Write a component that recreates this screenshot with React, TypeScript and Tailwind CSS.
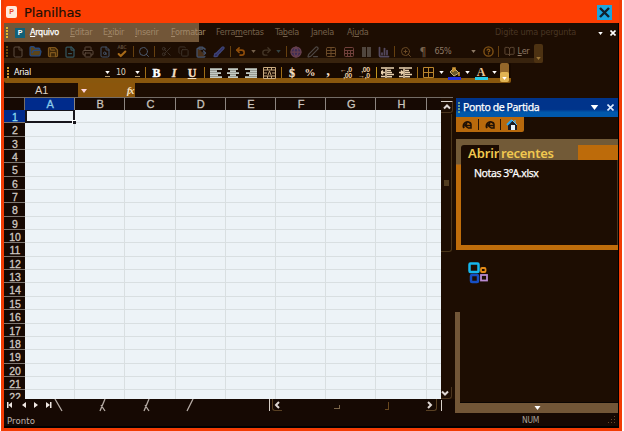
import React from "react";
import {
  File, FolderOpen, Save, FileMinus, Printer, FileSearch, Check, Search, Scissors, Copy, ClipboardPaste,
  Brush, Undo2, Redo2, Globe, PenLine, Table, Sheet, ChartColumn, ZoomIn, CircleHelp, BookOpen,
} from "lucide-react";

const columns = ["A", "B", "C", "D", "E", "F", "G", "H"];
const rows = Array.from({ length: 22 }, (_, i) => i + 1);

const menu = [
  { pre: "", key: "E", post: "ditar", cls: "w-[33px] text-[#a08769]" },
  { pre: "E", key: "x", post: "ibir", cls: "w-[32px] text-[#a08769]" },
  { pre: "", key: "I", post: "nserir", cls: "w-[36px] text-[#a08769]" },
  { pre: "", key: "F", post: "ormatar", cls: "w-[45px] text-[#a08769]" },
  { pre: "Ferra", key: "m", post: "entas", cls: "w-[59px] text-[#74604a]" },
  { pre: "Ta", key: "b", post: "ela", cls: "w-[36px] text-[#74604a]" },
  { pre: "", key: "J", post: "anela", cls: "w-[36px] text-[#74604a]" },
  { pre: "Aj", key: "u", post: "da", cls: "w-[30px] text-[#74604a]" },
];

function Slot({ cls, children }: { cls: string; children?: React.ReactNode }) {
  return <div className={"flex h-full shrink-0 items-center justify-center " + cls}>{children}</div>;
}

function Sep({ cls, line }: { cls: string; line: string }) {
  return (
    <Slot cls={cls}>
      <div className={"h-[11px] w-px " + line} />
    </Slot>
  );
}

function Caret({ cls }: { cls: string }) {
  return (
    <svg viewBox="0 0 6 4" className={"h-[3px] w-[5px] shrink-0 " + cls} fill="currentColor">
      <path d="M0 0h6L3 4z" />
    </svg>
  );
}

function Handle({ cls }: { cls: string }) {
  return (
    <svg viewBox="0 0 3 12" className={"h-[12px] w-[3px] shrink-0 " + cls} fill="currentColor">
      <path d="M0 0h2v2H0zM0 3h2v2H0zM0 6h2v2H0zM0 9h2v2H0z" />
    </svg>
  );
}

function AppBadge({ cls }: { cls: string }) {
  return (
    <div className={"flex shrink-0 items-center justify-center font-['Liberation_Sans',sans-serif] font-bold leading-none " + cls}>P</div>
  );
}

function Lines({ kind }: { kind: "left" | "center" | "right" }) {
  const d = {
    left: "M0 1h12M0 3h7M0 5h11M0 7h8M0 9h12",
    center: "M1 1h10M3 3h6M0 5h12M3 7h6M1 9h10",
    right: "M0 1h12M5 3h7M1 5h11M4 7h8M0 9h12",
  }[kind];
  return (
    <svg viewBox="0 0 12 10" className="h-[10px] w-[12px]" stroke="#c4cbc4" strokeWidth="1.75">
      <path d={d} />
    </svg>
  );
}

function Indent({ back }: { back?: boolean }) {
  return (
    <svg viewBox="0 0 13 11" className="h-[11px] w-[13px]" fill="none" stroke="#ead2b0" strokeWidth="1.6">
      <path d="M0 1h4M6 1h7M6 3.5h4M0 9.5h4M6 7.5h7M6 9.7h5M5 0v11" />
      <path d={back ? "M4 5.5H0M2 3.5l-2 2 2 2M6 5.5h5" : "M0 5.5h4M2 3.5l2 2-2 2M6 5.5h5"} />
    </svg>
  );
}

function Decimals({ first, second }: { first: string; second: string }) {
  return (
    <div className="flex flex-col items-end font-['Liberation_Sans',sans-serif] text-[7px] font-bold leading-[6px] tracking-[-0.3px] text-[#ead2a8]">
      <span>{first}</span>
      <span>{second}</span>
    </div>
  );
}

function MenuBar() {
  return (
    <div className="flex h-[19px] items-center bg-[#1d0d02] font-['DejaVu_Sans_Condensed','DejaVu_Sans',sans-serif] text-[9px] leading-none tracking-[-0.3px]">
      <div className="flex h-full w-[195px] shrink-0 items-center whitespace-nowrap bg-[#725638]">
        <Handle cls="ml-[2px] mr-[6px] text-[#e0b52c]" />
        <AppBadge cls="mr-[5px] h-[10px] w-[10px] bg-[#126078] text-[7px] text-white" />
        <div className="w-[40px] shrink-0 text-white [-webkit-text-stroke:0.25px_white]"><u>A</u>rquivo</div>
        {menu.slice(0, 4).map((m) => (
          <div key={m.key} className={"shrink-0 " + m.cls}>{m.pre}<u>{m.key}</u>{m.post}</div>
        ))}
      </div>
      <div className="w-[17px] shrink-0" />
      {menu.slice(4).map((m) => (
        <div key={m.key} className={"shrink-0 " + m.cls}>{m.pre}<u>{m.key}</u>{m.post}</div>
      ))}
      <div className="ml-[118px] w-[103px] shrink-0 whitespace-nowrap tracking-[-0.15px] text-[#493522]">Digite uma pergunta</div>
      <Caret cls="mt-[2px] text-white" />
      <svg viewBox="0 0 6 6" className="ml-[7px] h-[6px] w-[6px]" stroke="white" strokeWidth="1.6">
        <path d="M0.5 0.5l5 5M5.500 0.5l-5 5" />
      </svg>
    </div>
  );
}

const sepDim = "bg-[#66400f]";

function StandardBar() {
  return (
    <div className="flex h-[21px] bg-[#1d0d02]">
      <div className="flex h-full w-[539px] items-center rounded-r-[2px] border-b-[5px] border-[#38230e] bg-[#1d0d02] pl-px pt-[3px] font-['DejaVu_Sans_Condensed','DejaVu_Sans',sans-serif] text-[9px] leading-none">
        <Slot cls="w-[5px]"><Handle cls="text-[#68480f]" /></Slot>
        <Slot cls="w-[16px]"><File size={12} strokeWidth={2} color="#5c4c3e" /></Slot>
        <Slot cls="w-[18px]"><FolderOpen size={13} strokeWidth={2.5} color="#27497c" fill="#5c451a" /></Slot>
        <Slot cls="w-[17px]"><Save size={12} strokeWidth={2.5} color="#80571c" fill="#3d2608" /></Slot>
        <Slot cls="w-[18px]"><FileMinus size={12} strokeWidth={2.500} color="#33545c" /></Slot>
        <Slot cls="w-[17px]"><Printer size={12} color="#5d4b3d" /></Slot>
        <Slot cls="w-[18px]"><FileSearch size={12} color="#44546a" /></Slot>
        <Slot cls="w-[16px]">
          <div className="flex flex-col items-center text-[5px] leading-[4px] text-[#75604c]">
            ABC
            <Check size={10} strokeWidth={5} color="#a86b19" />
          </div>
        </Slot>
        <Sep cls="w-[6px]" line={sepDim} />
        <Slot cls="w-[15px]"><Search size={12} color="#4b576a" /></Slot>
        <Sep cls="w-[7px]" line={sepDim} />
        <Slot cls="w-[16px]"><Scissors size={11} color="#40342c" /></Slot>
        <Slot cls="w-[18px]"><Copy size={11} color="#40342c" /></Slot>
        <Slot cls="w-[18px]"><ClipboardPaste size={12} strokeWidth={2.500} color="#43536e" fill="#49301a" /></Slot>
        <Slot cls="w-[17px]"><Brush size={12} strokeWidth={2.500} color="#3e4577" fill="#302b60" /></Slot>
        <Sep cls="w-[6px]" line={sepDim} />
        <Slot cls="w-[14px]"><Undo2 size={11} strokeWidth={3.500} color="#8f4d0a" /></Slot>
        <Slot cls="w-[12px]"><Caret cls="text-[#75604b]" /></Slot>
        <Slot cls="w-[14px]"><Redo2 size={11} strokeWidth={3} color="#433526" /></Slot>
        <Slot cls="w-[11px]"><Caret cls="text-[#344344]" /></Slot>
        <Sep cls="w-[4px]" line={sepDim} />
        <Slot cls="w-[16px]"><Globe size={12} strokeWidth={2.500} color="#68404f" fill="#3a2c55" /></Slot>
        <Slot cls="w-[18px]"><PenLine size={12} strokeWidth={2.500} color="#4e4743" /></Slot>
        <Slot cls="w-[18px]"><Table size={12} color="#6b4a28" /></Slot>
        <Slot cls="w-[17px]"><Sheet size={12} color="#70403b" /></Slot>
        <Slot cls="w-[18px]"><div className="flex gap-px"><i className="h-[10px] w-[4px] bg-[#50463e]" /><i className="h-[10px] w-[4px] bg-[#50463e]" /></div></Slot>
        <Slot cls="w-[17px]"><ChartColumn size={12} strokeWidth={3.500} color="#54495f" /></Slot>
        <Sep cls="w-[5px]" line={sepDim} />
        <Slot cls="w-[17px]"><ZoomIn size={12} color="#6b4a24" /></Slot>
        <Slot cls="w-[18px] text-[12px] text-[#79634c]">¶</Slot>
        <Slot cls="w-[22px] tracking-[-0.4px] text-[#8d7965]">65%</Slot>
        <Slot cls="ml-[12px] w-[15px]"><Caret cls="text-[#8d7965]" /></Slot>
        <Slot cls="w-[14px]"><CircleHelp size={11} strokeWidth={3} color="#805215" /></Slot>
        <Sep cls="w-[7px]" line={sepDim} />
        <Slot cls="w-[15px]"><BookOpen size={11} color="#624c38" /></Slot>
        <Slot cls="w-[13px] tracking-[-0.3px] text-[#8d7965]"><span><u>L</u>er</span></Slot>
        <div className="-mt-[2px] -mb-[5px] ml-[4px] flex h-[19px] w-[9px] shrink-0 items-end justify-center self-end rounded-[2px] bg-[#4d3212] pb-[3px]"><Caret cls="text-[#9b7538]" /></div>
      </div>
    </div>
  );
}

const sepGold = "bg-[#a06e17]";

function FormatBar() {
  return (
    <div className="flex h-[20px] bg-[#1d0d02]">
      <div className="flex h-[20px] w-[507px] rounded-[2px] border-b-[5px] border-[#89570d] bg-[#170900] pl-px font-['Liberation_Serif',serif] text-[12px] font-bold leading-none text-[#f3dfc2]">
        <Slot cls="w-[6px]"><Handle cls="mt-[4px] text-[#c9942c]" /></Slot>
        <div className="mt-[5px] w-[93px] pl-[3px] font-['DejaVu_Sans_Condensed',sans-serif] text-[9px] font-normal tracking-[-0.3px] text-white">Arial</div>
        <Slot cls="mt-[3px] w-[6px]"><span className="border-b border-[#b59a71] pb-[2px]"><Caret cls="text-white" /></span></Slot>
        <div className="mt-[5px] w-[23px] pl-[6px] font-['DejaVu_Sans_Condensed',sans-serif] text-[9px] font-normal tracking-[-0.5px] text-[#ddd0be]">10</div>
        <Slot cls="mt-[3px] w-[9px]"><span className="border-b border-[#b59a71] pb-[2px]"><Caret cls="text-white" /></span></Slot>
        <Sep cls="mt-[2px] w-[6px]" line={sepGold} />
        <Slot cls="mt-[2px] w-[17px] text-white [-webkit-text-stroke:0.5px_white]">B</Slot>
        <Slot cls="mt-[2px] w-[18px] italic [-webkit-text-stroke:0.4px_currentColor]">I</Slot>
        <Slot cls="mt-[2px] w-[18px] underline [-webkit-text-stroke:0.4px_currentColor]">U</Slot>
        <Sep cls="mt-[2px] w-[6px]" line={sepGold} />
        <Slot cls="mt-[2px] w-[17px]"><Lines kind="left" /></Slot>
        <Slot cls="mt-[2px] w-[18px]"><Lines kind="center" /></Slot>
        <Slot cls="mt-[2px] w-[18px]"><Lines kind="right" /></Slot>
        <Slot cls="mt-[2px] w-[19px]">
          <svg viewBox="0 0 13 12" className="h-[12px] w-[13px]" fill="none" stroke="#c9ab80">
            <path d="M.5.5h12v11H.5zM.5 3h12M.5 9h12M4.5 0v3M8.5 0v3M4.5 9v3M8.5 9v3M1 6h3M9 6h3M5 8l1.5-4L8 8" />
          </svg>
        </Slot>
        <Sep cls="mt-[2px] w-[4px]" line={sepGold} />
        <Slot cls="mt-[2px] w-[18px] [-webkit-text-stroke:0.3px_currentColor]">$</Slot>
        <Slot cls="mt-[2px] w-[18px] text-[11px]">%</Slot>
        <Slot cls="w-[18px] text-[15px]">,</Slot>
        <Slot cls="mt-[2px] w-[18px]"><Decimals first="←,0" second=",00" /></Slot>
        <Slot cls="mt-[2px] w-[18px]"><Decimals first=",00" second="→,0" /></Slot>
        <Sep cls="mt-[2px] w-[6px]" line="bg-[#c3961e]" />
        <Slot cls="mt-[2px] w-[17px]"><Indent back /></Slot>
        <Slot cls="mt-[2px] w-[18px]"><Indent /></Slot>
        <Sep cls="mt-[2px] w-[6px]" line={sepGold} />
        <Slot cls="mt-[2px] w-[16px]">
          <svg viewBox="0 0 11 11" className="h-[11px] w-[11px]" fill="none" stroke="#b9852d"><path d="M.5.5h10v10H.5zM5.5 0v11M0 5.5h11" /></svg>
        </Slot>
        <Slot cls="mt-[2px] w-[10px]"><Caret cls="text-white" /></Slot>
        <Slot cls="mt-[3px] w-[17px]">
          <svg viewBox="0 0 13 13" className="h-[13px] w-[13px]"><path d="M6 1l5 5-5 3-4-4z" fill="#6c5a2a" stroke="#c2ad7b" /><path d="M5 5V1h2v3M11 5v4" fill="none" stroke="#d49b36" strokeWidth="1.500" /><path d="M0 10h13v3H0z" fill="#2430df" /></svg>
        </Slot>
        <Slot cls="mt-[2px] w-[9px]"><Caret cls="text-white" /></Slot>
        <Slot cls="mt-[3px] w-[18px]"><div className="flex h-[13px] w-[13px] justify-center border-b-[3px] border-[#28cbe8] text-[12px] leading-[10px] text-[#eac594]">A</div></Slot>
        <Slot cls="mt-[2px] w-[9px]"><Caret cls="text-white" /></Slot>
        <div className="ml-[1px] flex h-[19px] w-[9px] shrink-0 flex-col justify-end rounded-[2px] bg-[#94672a]">
          <div className="flex h-[10px] items-end justify-center rounded-[2px] bg-[#e1b453] pb-[2px]"><Caret cls="text-white" /></div>
        </div>
      </div>
    </div>
  );
}

function FormulaBar() {
  return (
    <div className="flex h-[14px] bg-[#1d0d02] font-['Liberation_Sans',sans-serif] text-[11px] leading-[14px] text-[#ddd0c4]">
      <div className="w-[74px] pl-[31px]">A1</div>
      <div className="flex w-[57px] items-center justify-between bg-[#8b560c] pl-[3px] pr-[2px]">
        <Caret cls="mt-[2px] h-[4px]! w-[6px]! text-[#ffd4dc]" />
        <span className="font-['Liberation_Serif',serif] text-[11px] font-bold italic tracking-[-1.5px] text-[#f5dfba]">fx</span>
      </div>
    </div>
  );
}

function SheetArea() {
  return (
    <div className="flex h-[302px] w-[437px] flex-col overflow-hidden font-['Liberation_Sans',sans-serif]">
      <div className="flex h-[13px] shrink-0 border-t border-[#746c66] bg-[#160903] text-[11px] leading-[13px] text-[#c9c3bd]">
        <div className="w-[21px] shrink-0 border-r border-[#746c66]" />
        {columns.map((c) => (
          <div key={c} className={"w-[50.2px] shrink-0 border-r border-[#8c8580] text-center " + (c === "A" ? "bg-[#002b8c] text-[#8bcbea]" : "")}>
            <span className="pl-px [-webkit-text-stroke:0.3px_currentColor]">{c}</span>
          </div>
        ))}
      </div>
      {rows.map((r) => (
        <div key={r} className="flex h-[13.35px] shrink-0">
          <div className={"w-[21px] shrink-0 border-b border-[#7e7771] pl-px text-center text-[10.5px] leading-[14px] [-webkit-text-stroke:0.3px_currentColor] " + (r === 1 ? "bg-[#002b8c] text-[#8bdcf2]" : "bg-[#160903] text-[#cfc8c2]")}>{r}</div>
          {columns.map((c) =>
            r === 1 && c === "A" ? (
              <div key={c} className="relative w-[50.2px] shrink-0 border-2 border-t border-[#17151b] bg-[#edf3f7]">
                <i className="absolute -bottom-[3px] -right-[3px] h-[4px] w-[4px] border-l border-t border-white bg-[#17151b]" />
              </div>
            ) : (
              <div key={c} className="w-[50.2px] shrink-0 border-b border-r border-[#d9dfe1] bg-[#edf3f7]" />
            ),
          )}
          <div className="w-[14.4px] shrink-0 border-b border-[#d9dfe1] bg-[#edf3f7]" />
        </div>
      ))}
    </div>
  );
}

function Chevron({ d, cls }: { d: string; cls: string }) {
  return (
    <svg viewBox="0 0 8 8" className={"h-[8px] w-[8px] " + cls} fill="none" stroke="#ded6d3" strokeWidth="2"><path d={d} /></svg>
  );
}

function VerticalScroll() {
  return (
    <div className="flex h-[302px] w-[12px] flex-col justify-between border-t border-[#746c66]">
      <div>
        <div className="mt-[3px] flex h-[12px] items-center justify-center rounded-br-[3px] border-b border-r border-t border-[#4b351e] border-t-[#d8d0c9]"><Chevron d="M1 5.5l3-3 3 3" cls="" /></div>
        <div className="mt-px flex h-[138px] w-[11px] items-center justify-center rounded-br-[3px] border-b border-r border-[#493519]"><i className="h-[6px] w-[5px] bg-[#523d20]" /></div>
      </div>
      <div className="flex h-[12px] w-[11px] items-center justify-center rounded-br-[3px] border-b border-r border-[#4b351e]"><Chevron d="M1 2.5l3 3 3-3" cls="mr-[2px]" /></div>
    </div>
  );
}

function SheetTabs() {
  return (
    <div className="flex h-[14px] items-start bg-[#160903]">
      <svg viewBox="0 0 200 14" className="h-[14px] w-[200px]" fill="#efe8e3">
        <path d="M3 3h1.500v6H3zM8 3v6L4.500 6zM22 3v6l-4-3zM30 3l4 3-4 3zM42 3l4 3-4 3zM46 3h1.500v6H46z" />
        <path d="M51 0l7 12M101 0l-5 12M97 6l4 6M145 0l-5 12M141 6l4 6M189 0l-6 12" fill="none" stroke="#b5aba4" strokeWidth="1.300" />
      </svg>
      <div className="ml-[65px] h-[12px] w-px bg-[#d8d0c9]" />
      <div className="ml-[2px] flex h-[12px] w-[10px] items-center rounded-bl-[3px] border-b border-l border-[#594022]"><Chevron d="M6 1L3 4l3 3" cls="" /></div>
      <div className="ml-[52px] mt-[6px] h-[4px] w-[6px] border-b border-r border-[#796348]" />
      <div className="ml-[45px] mt-[3px] h-[8px] w-[4px] border-b border-r border-[#68471e]" />
      <div className="ml-[37px] flex h-[12px] w-[11px] items-center rounded-br-[3px] border-b border-r border-[#594022]"><Chevron d="M2 1l3 3-3 3" cls="" /></div>
      <div className="ml-[4px] mt-px h-[11px] w-px bg-[#d8d0c9]" />
    </div>
  );
}

function RoundIcon() {
  return (
    <svg viewBox="0 0 12 12" className="h-[12px] w-[12px]" fill="none" stroke="#1f1005" strokeWidth="2">
      <path d="M3 9A4 4 0 1 1 10 5" />
      <path d="M6 4L4 6.500 7 9M5 6.500h5M10 5v4H7" strokeWidth="1.500" />
    </svg>
  );
}

function TaskPane() {
  return (
    <div className="flex h-[316px] w-[163px] flex-col bg-[#1d0d02] font-['Noto_Sans',sans-serif]">
      <div className="ml-px mt-px flex h-[19px] items-center bg-linear-to-b from-[#00348b] from-60% to-[#0058ac] to-75% text-white">
        <Handle cls="ml-[2px] text-[#6d9f86]" />
        <span className="ml-[2px] w-[127px] whitespace-nowrap text-[10.500px] leading-none tracking-[-0.4px] [-webkit-text-stroke:0.25px_white]">Ponto de Partida</span>
        <Caret cls="h-[5px]! w-[9px]!" />
        <svg viewBox="0 0 7 7" className="ml-[8px] h-[7px] w-[7px]" stroke="#dceaff" strokeWidth="1.600"><path d="M.5.5l6 6M6.500.5l-6 6" /></svg>
      </div>
      <div className="ml-px flex h-[15px] w-[68px] items-center rounded-br-[2px] bg-[#b8690c] pl-[5px]">
        <RoundIcon />
        <i className="mx-[5px] h-[11px] w-px bg-[#271405]" />
        <RoundIcon />
        <i className="ml-[4px] mr-[5px] h-[11px] w-px bg-[#271405]" />
        <svg viewBox="0 0 12 12" className="h-[12px] w-[12px]"><path d="M1 6l5-5 5 5v5H2V6z" fill="#1c1c24" /><path d="M1 6l5-5" stroke="#2ba5ed" strokeWidth="2" /><path d="M5 6h4v5H5z" fill="#e7f4ff" /><path d="M6 1l5 5M9 1v3" stroke="#52bfff" /></svg>
      </div>
      <div className="ml-px mt-[7px] flex h-[111px] shrink-0 flex-col bg-linear-to-b from-[#725a37] from-[25px] to-[#bf6d0b] to-[26px] pb-[5px] pl-[5px] pt-[6px]">
        <div className="flex h-[15px] shrink-0 text-[13px] font-semibold leading-[16px] text-[#f1c84f]">
          <div className="w-[38px] rounded-tl-[3px] bg-[#1b0b01] pl-[7px] tracking-[-0.1px]">Abrir</div>
          <div className="w-[79px] bg-[#725a37] pl-[2px] tracking-[-0.25px]">recentes</div>
          <div className="flex-1 bg-[#bd6b0a]" />
        </div>
        <div className="flex-1 border-r border-[#4c371e] bg-[#1d0d02] pl-[13px] pt-[6px] text-[10.500px] leading-[14px] tracking-[-0.4px] text-white [-webkit-text-stroke:0.25px_white]">Notas 3ºA.xlsx</div>
      </div>
      <svg viewBox="0 0 22 22" className="ml-[13px] mt-[12px] h-[22px] w-[22px] shrink-0" fill="none">
        <rect x="1.500" y="1.500" width="9" height="8.500" rx="1" stroke="#16b7ed" strokeWidth="2.500" />
        <rect x="13" y="6" width="4.500" height="4" rx="1" stroke="#e58c18" strokeWidth="1.800" />
        <rect x="3" y="13" width="7" height="7" rx="1" stroke="#164fc4" strokeWidth="2.500" />
        <rect x="13" y="13" width="6" height="5.500" stroke="#b98bd2" strokeWidth="1.800" />
      </svg>
      <div className="mt-[28px] flex flex-1 flex-col border-l-[5px] border-[#725637]">
        <div className="flex-1 border-b border-[#0a0503]" />
        <div className="flex h-[10px] items-center bg-[#725637] pl-[74px]"><Caret cls="h-[4px]! w-[7px]! text-white" /></div>
      </div>
    </div>
  );
}

export default function App() {
  return (
    <div className="flex h-[431px] w-[624px] overflow-hidden bg-white pl-px">
      <div className="flex w-[621px] flex-col border-b-[3px] border-l-[3px] border-r-[3px] border-[#f23c04]">
        <div className="flex h-[23px] shrink-0 items-center bg-[#fd3e02] font-['DejaVu_Sans',sans-serif] text-[13px] leading-none text-[#211006]">
          <AppBadge cls="ml-[2px] h-[12px] w-[11px] rounded-[2px] bg-[#ffe9dd] text-[7px] text-[#e84725]" />
          <div className="ml-[7px] mt-px w-[573px] tracking-[-0.1px] [-webkit-text-stroke:0.2px_#211006]">Planilhas</div>
          <div className="mt-[2px] flex h-[15px] w-[15px] items-center justify-center bg-[#1ba5df]">
            <svg viewBox="0 0 11 11" className="h-[11px] w-[11px]" stroke="#10202e" strokeWidth="2.400"><path d="M1 1l9 9M10 1l-9 9" /></svg>
          </div>
        </div>
        <div className="flex flex-1 flex-col border-r border-black bg-[#1d0d02]">
          <MenuBar />
          <StandardBar />
          <FormatBar />
          <FormulaBar />
          <div className="flex h-[316px]">
            <div className="flex w-[451px] flex-col">
              <div className="flex"><SheetArea /><VerticalScroll /></div>
              <SheetTabs />
            </div>
            <TaskPane />
          </div>
          <div className="flex flex-1 items-center border-b-2 border-black bg-[#160903] pt-[2px] font-['DejaVu_Sans_Condensed',sans-serif] text-[9.500px] leading-none text-[#bfb5ae]">
            <span className="w-[518px] pl-[3px] tracking-[0.1px]">Pronto</span>
            <span className="w-[86px] text-[8.500px] tracking-[-0.3px] text-[#a9a098]">NUM</span>
            <svg viewBox="0 0 9 9" className="h-[9px] w-[9px]" fill="#69492c"><path d="M6 0h1v1H6zM3 3h1v1H3zM6 3h1v1H6zM0 6h1v1H0zM3 6h1v1H3zM6 6h1v1H6z" /></svg>
          </div>
        </div>
      </div>
    </div>
  );
}
